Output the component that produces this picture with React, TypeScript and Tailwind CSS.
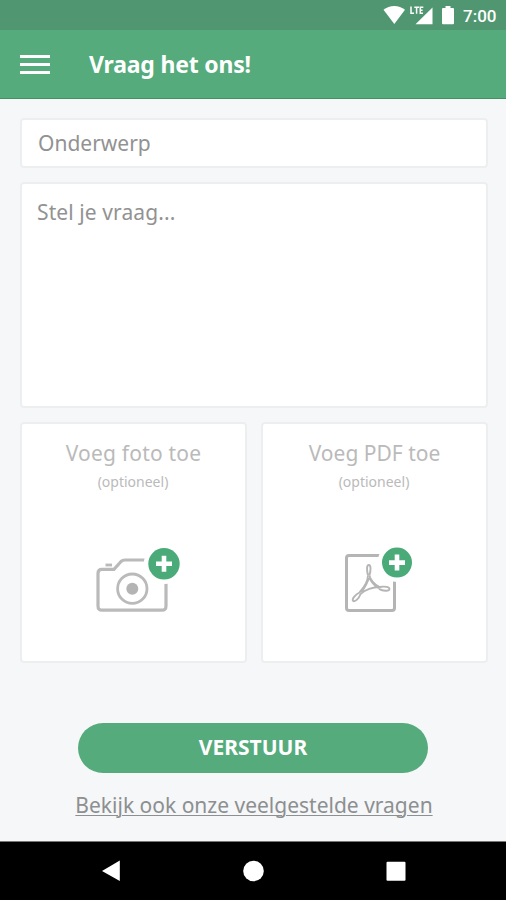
import type { ReactNode } from "react";

function StatusBar() {
  return (
    <div className="flex h-[30px] items-start justify-end bg-[#509771] pr-[9px] text-white">
      <svg width="80" height="30" viewBox="383 0 80 30" fill="currentColor">
        <path d="M383.5 9.8C389.5 4.7 399 4.7 405 9.8L394.3 24Z" />
        <path d="M432.5 7.5V24.2H415.5Z" />
        <path d="M411 6.5V13.2H414M414.3 7.2H419M416.6 7.2V13.8M423.3 7.2H420.3V13.2H423M420.3 10.2H422.6" fill="none" stroke="currentColor" strokeWidth="1.5" />
        <path d="M445.5 6h5v2h2.5q1 0 1 1v14q0 1.2-1 1.2h-10q-1 0-1-1.2V9q0-1 1-1h2.5Z" />
      </svg>
      <span className="w-[34px] whitespace-nowrap pt-[6px] font-[Roboto] text-[17px] leading-[20px] font-medium">7:00</span>
    </div>
  );
}

function PlusBadge({ x, y, r }: { x: number; y: number; r: number }) {
  return (
    <g>
      <circle cx={x} cy={y} r={r + 4.5} fill="#fff" stroke="none" />
      <circle cx={x} cy={y} r={r} fill="#4aaa78" stroke="none" />
      <path d={`M${x - 8} ${y}H${x + 8}M${x} ${y - 8}V${y + 8}`} stroke="#fff" strokeWidth="4.6" />
    </g>
  );
}

function CameraIcon() {
  return (
    <svg width="102" height="74" viewBox="83 543 102 74" fill="none" stroke="#bababa" strokeWidth="3.2">
      <path d="M102 569.3H114L121 561.5Q122.5 560 125 560H162Q166 560 166 564V606Q166 610.2 162 610.2H102Q98 610.2 98 606V573.3Q98 569.3 102 569.3Z" />
      <path d="M105.5 565H112" strokeWidth="2.8" />
      <circle cx="132.3" cy="588.7" r="14.7" strokeWidth="2.8" />
      <circle cx="132.3" cy="588.7" r="6" fill="#b4b4b4" stroke="none" />
      <PlusBadge x={164} y={563.8} r={15.7} />
    </svg>
  );
}

function PdfIcon() {
  return (
    <svg width="84" height="74" viewBox="333 543 84 74" fill="none" stroke="#b5b5b5" strokeWidth="3">
      <rect x="346.5" y="555.5" width="48" height="55" rx="2.5" />
      <g strokeWidth="1.9" strokeLinejoin="round">
        <path d="M368 575.5C366.6 570 366.6 565 368.8 565C371 565 371 570 369.4 575.5" />
        <path d="M368 575.5C368 581 363.5 588 359.5 592.5C355 594.5 351.8 599.5 353 600.8C355 602.3 359 598.5 360.5 594" />
        <path d="M369.4 575.5C370.5 580.5 374.5 584.5 379.5 587C385 586 389.8 587 389.4 589.2C388.8 591.5 383 591 379 588.8" />
        <path d="M379.5 587C373 587 365 589.8 360.5 594M368.8 578C367.5 583 364 588.5 361.5 592M369.5 578C371.5 583 375 586 379 588.5" />
      </g>
      <PlusBadge x={397} y={562.6} r={15} />
    </svg>
  );
}

function UploadCard({ title, tracking, children }: { title: string; tracking: string; children: ReactNode }) {
  return (
    <button className="flex h-[241px] flex-1 flex-col items-center rounded-[4px] border-2 border-[#eceff0] bg-white pt-[14px] text-[#bababa]">
      <span className={`text-[21px] leading-[30px] ${tracking}`}>{title}</span>
      <span className="mt-[4px] mr-[1px] text-[14px] leading-[20px]">(optioneel)</span>
      <span className="mt-[51px] block">{children}</span>
    </button>
  );
}

export default function App() {
  return (
    <div className="flex h-[900px] w-[506px] flex-col overflow-hidden bg-[#f5f7f9] font-['Noto_Sans',sans-serif]">
      <StatusBar />
      <header className="flex h-[69px] items-center border-b border-[#419265] bg-[#55ab7c] pl-5 text-white">
        <div className="flex w-[30px] flex-col gap-[5px]">
          <span className="h-[3px] bg-white" />
          <span className="h-[3px] bg-white" />
          <span className="h-[3px] bg-white" />
        </div>
        <h1 className="ml-[39px] text-[23px] font-bold tracking-[-0.2px]">Vraag het ons!</h1>
      </header>
      <main className="flex flex-1 flex-col px-5 pr-[18px] pt-[19px]">
        <div className="flex h-[50px] items-center rounded-[4px] border-2 border-[#eceff0] bg-white pl-[16px] pt-[1px] text-[21px] text-[#929292]">
          <span>Onderwerp</span>
        </div>
        <div className="mt-[14px] h-[226px] rounded-[4px] border-2 border-[#eceff0] bg-white pl-[15px] pt-[13px] text-[21px] leading-[30px] tracking-[0.1px] text-[#929292]">
          <span>Stel je vraag...</span>
        </div>
        <div className="mt-[14px] flex gap-[14px]">
          <UploadCard title="Voeg foto toe" tracking="tracking-[0.2px]"><CameraIcon /></UploadCard>
          <UploadCard title="Voeg PDF toe" tracking="tracking-normal"><PdfIcon /></UploadCard>
        </div>
        <button className="mt-[60px] ml-[58px] flex h-[50px] w-[350px] items-center justify-center rounded-full bg-[#55ab7c] text-[21px] font-bold text-white">
          <span>VERSTUUR</span>
        </button>
        <a className="mt-[17px] self-center text-[21px] leading-[30px] whitespace-nowrap text-[#8d8f90] underline decoration-1 underline-offset-[2px]">
          Bekijk ook onze veelgestelde vragen
        </a>
      </main>
      <nav className="h-[59px] shrink-0 border-t border-[#777] bg-black">
        <svg width="506" height="58" viewBox="0 842 506 58" fill="#fff">
          <path d="M119.8 860.5V881L102 871Z" />
          <circle cx="253.5" cy="871" r="10.3" />
          <rect x="386.5" y="861.8" width="19" height="19" rx="1" />
        </svg>
      </nav>
    </div>
  );
}
